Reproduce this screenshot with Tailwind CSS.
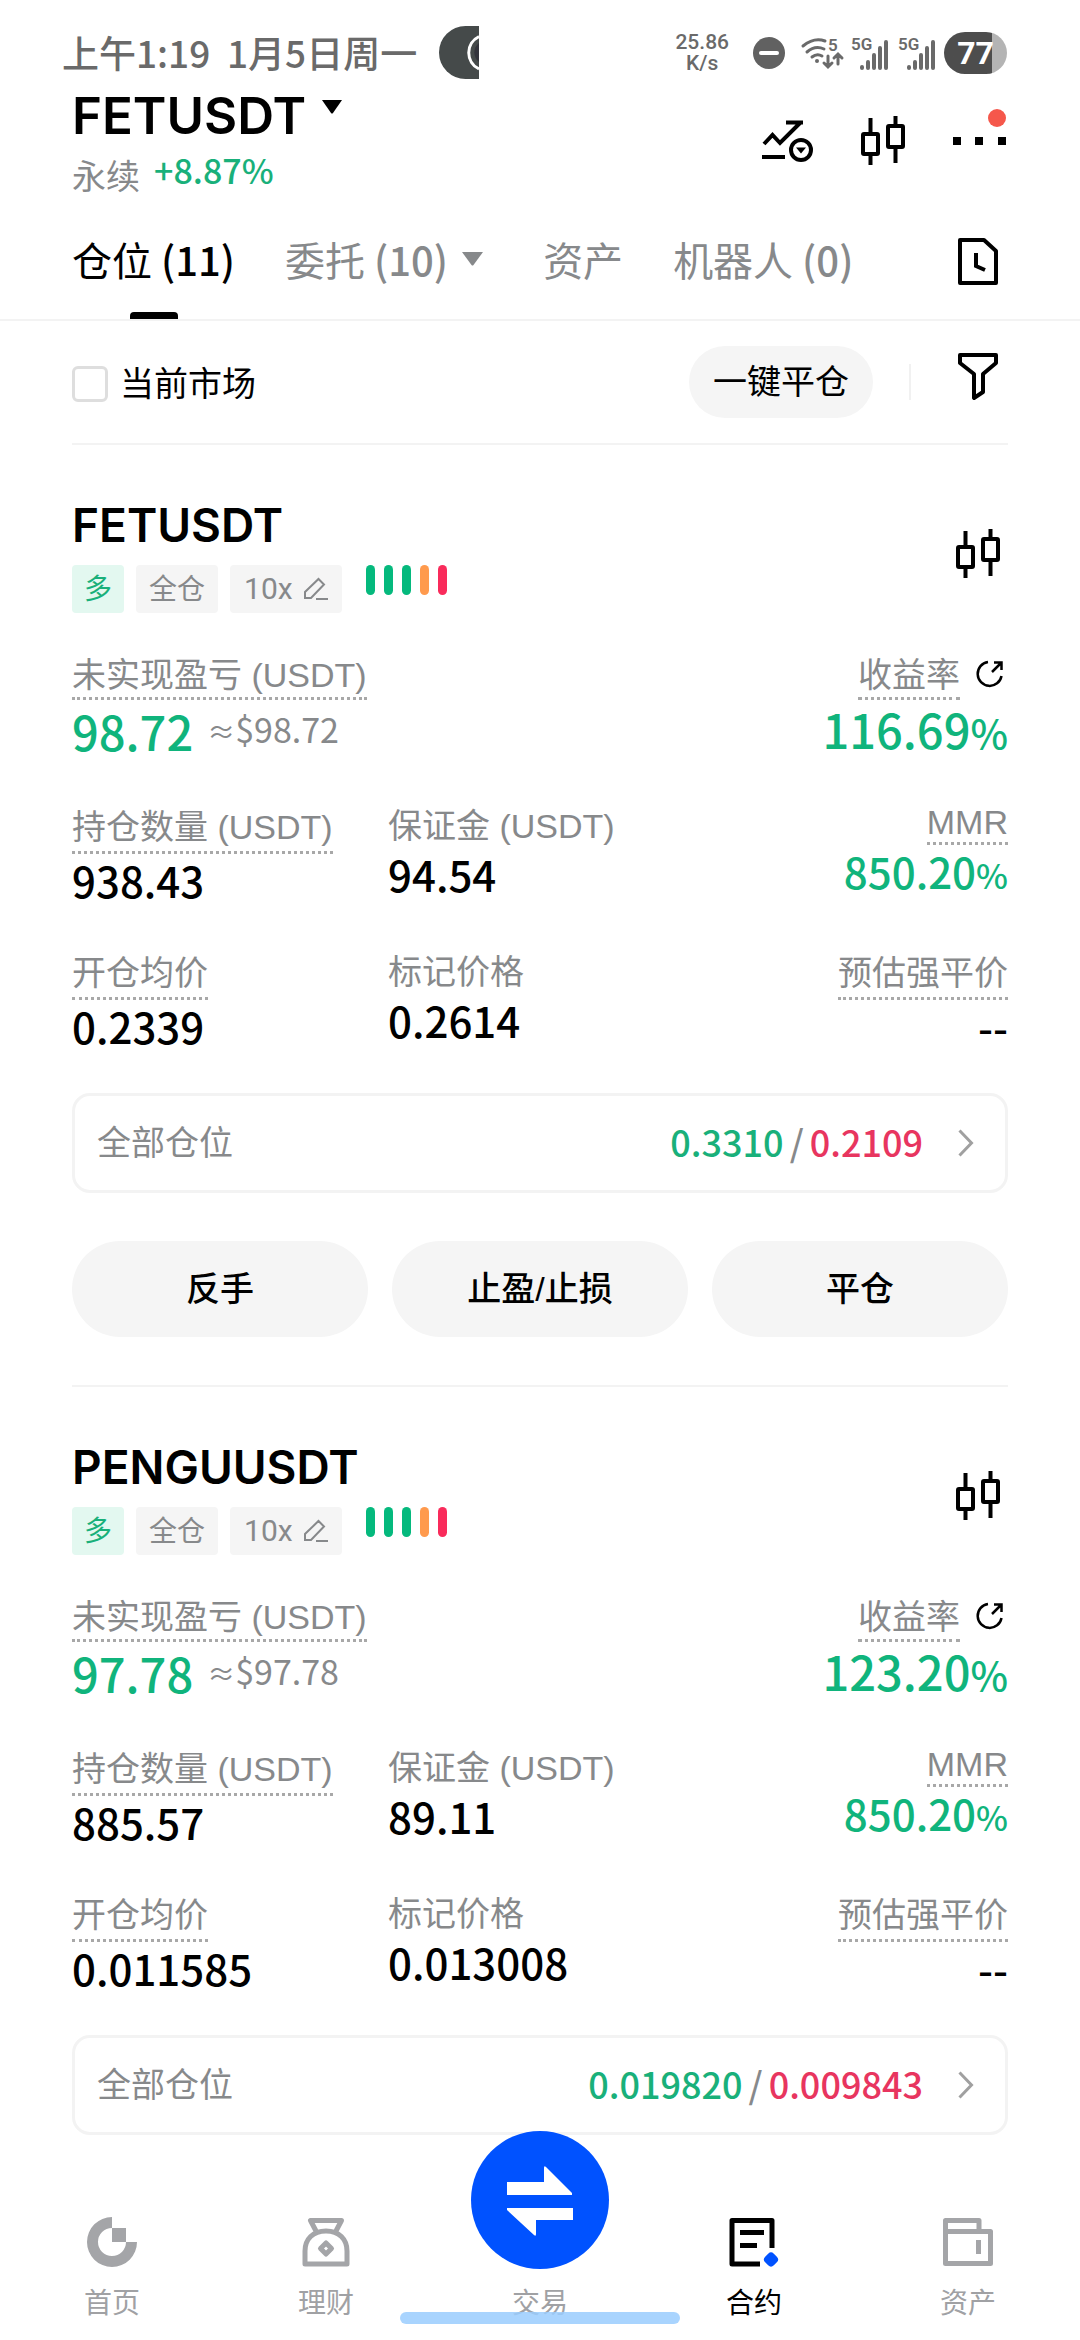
<!DOCTYPE html>
<html lang="zh-CN">
<head>
<meta charset="utf-8">
<meta name="viewport" content="width=device-width, initial-scale=1">
<title>FETUSDT 永续</title>
<script src="https://cdn.jsdelivr.net/npm/@tailwindcss/browser@4"></script>
</head>
<body class="bg-white text-black font-['Liberation_Sans','Noto_Sans_CJK_SC',sans-serif]">
<!-- shared icons -->
<svg class="hidden" aria-hidden="true">
  <symbol id="candles" viewBox="0 0 44 49"><g fill="none" stroke="currentColor" stroke-width="4"><rect x="2" y="18" width="15" height="20" rx="1"/><rect x="27" y="10" width="15" height="21" rx="1"/><path d="M9.500 2V18M9.500 38V49M34.500 0V10M34.500 31V47"/></g></symbol>
  <symbol id="pencil" viewBox="0 0 25 24"><g fill="none" stroke="currentColor" stroke-width="2"><path d="M2 21V15L15.500 2L21 7.500L8 21Z"/><path d="M13 22H25"/></g></symbol>
  <symbol id="share" viewBox="0 0 28 28"><g fill="none" stroke="currentColor" stroke-width="2.500"><path d="M12 2A12 12 0 1 0 25.500 16"/><path d="M16 12L25 3M18 2.500H25.500V10"/></g></symbol>
  <symbol id="chevron" viewBox="0 0 16 28"><path d="M1.500 1.500L13.500 14L1.500 26.500" fill="none" stroke="currentColor" stroke-width="3"/></symbol>
</svg>

<div class="flex min-h-screen flex-col">
  <!-- status bar -->
  <div class="flex items-center justify-between pt-[26px] pl-[62px] pr-[73px] text-[#6a6a6a]">
    <div class="flex items-center">
      <span class="whitespace-pre font-['Noto_Sans_CJK_SC',sans-serif] text-[37px] font-medium leading-[53px]">上午1:19  1月5日周一</span>
      <svg class="ml-[22px] h-[53px] w-10" viewBox="0 0 40 53"><path d="M40 0H26.500A26.500 26.500 0 0 0 26.500 53H40Z" fill="#454a4a"/><path d="M40 10.500A18 18 0 0 0 40 43" fill="none" stroke="#fff" stroke-width="3"/><path d="M40 17A12 12 0 0 0 40 36Z" fill="#33343c"/></svg>
    </div>
    <div class="flex items-center font-[Roboto,sans-serif]">
      <div class="text-center text-[21px] font-medium leading-[21px]">25.86<br>K/s</div>
      <svg class="ml-6 size-8" viewBox="0 0 32 32"><circle cx="16" cy="16" r="16" fill="#616161"/><path d="M8 16H24" stroke="#fff" stroke-width="4" stroke-linecap="round"/></svg>
      <svg class="ml-4 h-8 w-[42px] overflow-visible" viewBox="0 0 42 32"><g fill="none" stroke="#6a6a6a" stroke-width="3" stroke-linecap="round"><path d="M2 9Q13 0 24 4"/><path d="M6 15Q14 8 23 12"/><path d="M11 20Q16 16 21 19"/><path d="M27 19V29M23 26L27 30L31 26M37 27V18M33 21L37 17L41 21"/></g><circle cx="16" cy="24" r="2" fill="#6a6a6a"/><text x="27" y="14" font-size="17" font-weight="600" fill="#6a6a6a">5</text></svg>
      <svg class="ml-2 h-9 w-[38px]" viewBox="0 0 38 36"><g stroke="#6a6a6a" stroke-width="4" stroke-linecap="round"><path d="M11 32V33M17 27V33M23 20V33M29 13V33M35 7V33"/></g><text x="0" y="15" font-size="17" font-weight="600" fill="#6a6a6a">5G</text></svg>
      <svg class="ml-[9px] h-9 w-[38px]" viewBox="0 0 38 36"><g stroke="#6a6a6a" stroke-width="4" stroke-linecap="round"><path d="M11 32V33M17 27V33M23 20V33M29 13V33M35 7V33"/></g><text x="0" y="15" font-size="17" font-weight="600" fill="#6a6a6a">5G</text></svg>
      <div class="ml-2 flex h-[42px] w-[63px] items-center justify-center rounded-full bg-linear-to-r from-[#4d4d4d] from-76% to-[#b4b4b4] to-76% text-[32px] font-bold text-white">77</div>
    </div>
  </div>

  <!-- pair header -->
  <header class="flex items-center justify-between pt-[9px] pl-[72px] pr-[74px]">
    <div>
      <button class="flex items-start font-[Inter,sans-serif] text-[51px] font-semibold leading-[56px]">FETUSDT
        <svg class="ml-4 mt-3 h-[14px] w-5" viewBox="0 0 20 14"><path d="M0 0H20L11 13Q10 14 9 13Z"/></svg>
      </button>
      <div class="mt-[11px] flex items-start gap-[14px] text-[34px]">
        <span class="leading-[44px] text-[#87898b]">永续</span>
        <span class="font-['Noto_Sans_CJK_SC',sans-serif] font-medium leading-[30px] text-[#19b07a]">+8.87%</span>
      </div>
    </div>
    <div class="flex items-center gap-12 pb-[6px]">
      <button aria-label="行情"><svg class="h-[42px] w-[51px]" viewBox="0 0 51 42"><g fill="none" stroke="#000" stroke-width="4"><path d="M2 24L10.500 15L18 23L38 3M24 2.500H41M0 37H23"/><circle cx="39" cy="30" r="10"/></g><path d="M34 27.500H44L39 33.500Z"/></svg></button>
      <button aria-label="K线"><svg class="h-[49px] w-11"><use href="#candles"/></svg></button>
      <button class="relative" aria-label="更多"><svg class="h-2 w-[53px]" viewBox="0 0 53 8"><path d="M0 0H8V8H0ZM22 0H30V8H22ZM45 0H53V8H45Z"/></svg><span class="absolute -top-7 right-0 size-[18px] rounded-full bg-[#f5574b]"></span></button>
    </div>
  </header>

  <!-- tabs -->
  <nav class="mt-1 flex h-[118px] items-stretch border-b-2 border-[#f3f3f3] pl-[72px] pr-[82px] font-['Noto_Sans_CJK_SC',sans-serif] text-[40px] text-[#87898b]">
    <a href="#" class="relative flex items-center pb-1 text-black"><span>仓位 <span class="font-medium">(11)</span></span><span class="absolute bottom-0 left-1/2 h-[7px] w-12 -translate-x-1/2 rounded-t bg-black"></span></a>
    <a href="#" class="ml-[50px] flex items-center pb-1"><span>委托 <span class="font-medium">(10)</span></span><svg class="ml-[14px] h-[14px] w-[21px]" viewBox="0 0 21 14"><path d="M0 0H21L11.500 13Q10.500 14 9.500 13Z" fill="#87898b"/></svg></a>
    <a href="#" class="ml-[60px] flex items-center pb-1">资产</a>
    <a href="#" class="ml-[50px] flex items-center pb-1"><span>机器人 <span class="font-medium">(0)</span></span></a>
    <button class="ml-auto" aria-label="历史"><svg class="h-[47px] w-10" viewBox="0 0 40 47"><g fill="none" stroke="#000" stroke-width="4"><path d="M2 2H26L38 13V45H2Z" stroke-linejoin="round"/><path d="M18 15V28L27 32"/></g></svg></button>
  </nav>

  <main class="px-[72px]">
    <!-- filter row -->
    <div class="flex h-[124px] items-center border-b-2 border-[#f3f3f3] text-[34px]">
      <div class="flex items-center pt-1">
        <input id="cur" type="checkbox" class="size-9 appearance-none rounded-md border-3 border-[#dedede]">
        <label for="cur" class="pl-3">当前市场</label>
      </div>
      <button class="ml-auto h-[72px] rounded-full bg-[#f5f5f5] px-6">一键平仓</button>
      <span class="ml-9 h-9 w-[2px] bg-[#f1f1f1]"></span>
      <button class="ml-[47px] mr-[10px] -mt-3" aria-label="筛选"><svg class="h-[47px] w-10" viewBox="0 0 40 47"><path d="M2 2H38V10L25 21V39L16 45V21L2 10Z" fill="none" stroke="#000" stroke-width="4" stroke-linejoin="round"/></svg></button>
    </div>

    <!-- position: FET -->
    <section class="border-b-2 border-[#f3f3f3] pt-[52px] pb-12">
      <div class="flex items-center justify-between pr-2">
        <div>
          <h2 class="font-[Inter,sans-serif] text-[46px] font-semibold leading-[56px]">FETUSDT</h2>
          <div class="mt-3 flex items-start text-[28px] leading-[48px] text-[#87898b]">
            <span class="rounded bg-[#e3f8f0] px-3 pt-[2px] leading-[46px] text-[#19b07a]">多</span>
            <span class="ml-3 rounded bg-[#f5f5f5] px-[13px] pt-[2px] leading-[46px]">全仓</span>
            <button class="ml-3 flex items-center rounded bg-[#f5f5f5] px-[14px] font-[Roboto,sans-serif] text-[30px]">10x<svg class="ml-[10px] h-6 w-[25px]"><use href="#pencil"/></svg></button>
            <span class="ml-6 flex gap-[9px]"><i class="h-[30px] w-[9px] rounded-full bg-[#05b97d]"></i><i class="h-[30px] w-[9px] rounded-full bg-[#05b97d]"></i><i class="h-[30px] w-[9px] rounded-full bg-[#05b97d]"></i><i class="h-[30px] w-[9px] rounded-full bg-[#ff9a4d]"></i><i class="h-[30px] w-[9px] rounded-full bg-[#f92b5b]"></i></span>
          </div>
        </div>
        <button class="pb-1" aria-label="K线"><svg class="h-[49px] w-11"><use href="#candles"/></svg></button>
      </div>
      <div class="mt-10 flex justify-between text-[34px] leading-[44px] text-[#87898b]">
        <div>
          <span class="block w-fit border-b-3 border-dotted border-[#a8a8a8]">未实现盈亏 (USDT)</span>
          <div class="flex items-center gap-[14px] font-['Noto_Sans_CJK_SC',sans-serif] text-[34px] leading-[57px]"><span class="text-[47px] font-medium text-[#10b47c]">98.72</span><span><span class="text-[28px]">≈</span>$98.72</span></div>
        </div>
        <div class="flex flex-col items-end">
          <div class="flex items-start gap-4 pr-1"><span class="border-b-3 border-dotted border-[#a8a8a8]">收益率</span><button class="pt-[7px] text-black" aria-label="分享"><svg class="size-7"><use href="#share"/></svg></button></div>
          <div class="font-['Noto_Sans_CJK_SC',sans-serif] text-[47px] font-medium leading-[57px] text-[#10b47c]">116.69<span class="text-[40px]">%</span></div>
        </div>
      </div>
      <dl class="mt-[44px] grid grid-cols-[316fr_320fr_300fr] gap-y-[45px] font-['Noto_Sans_CJK_SC',sans-serif] text-[42px] font-medium leading-[52px]">
        <div><dt class="w-fit border-b-3 border-dotted border-[#a8a8a8] pb-[1px] font-['Liberation_Sans','Noto_Sans_CJK_SC',sans-serif] text-[34px] font-normal leading-[45px] text-[#87898b]">持仓数量 (USDT)</dt><dd>938.43</dd></div>
        <div><dt class="font-['Liberation_Sans','Noto_Sans_CJK_SC',sans-serif] text-[34px] font-normal leading-[43px] text-[#87898b]">保证金 (USDT)</dt><dd>94.54</dd></div>
        <div class="flex flex-col items-end"><dt class="border-b-3 border-dotted border-[#a8a8a8] pb-[2px] font-['Liberation_Sans','Noto_Sans_CJK_SC',sans-serif] text-[34px] font-normal leading-[35px] text-[#87898b]">MMR</dt><dd class="text-[#10b47c]">850.20<span class="text-[34px]">%</span></dd></div>
        <div><dt class="w-fit border-b-3 border-dotted border-[#a8a8a8] pb-[1px] font-['Liberation_Sans','Noto_Sans_CJK_SC',sans-serif] text-[34px] font-normal leading-[45px] text-[#87898b]">开仓均价</dt><dd>0.2339</dd></div>
        <div><dt class="font-['Liberation_Sans','Noto_Sans_CJK_SC',sans-serif] text-[34px] font-normal leading-[43px] text-[#87898b]">标记价格</dt><dd>0.2614</dd></div>
        <div class="flex flex-col items-end"><dt class="border-b-3 border-dotted border-[#a8a8a8] pb-[1px] font-['Liberation_Sans','Noto_Sans_CJK_SC',sans-serif] text-[34px] font-normal leading-[45px] text-[#87898b]">预估强平价</dt><dd>--</dd></div>
      </dl>
      <a href="#" class="mt-[41px] flex h-[100px] items-center rounded-[18px] border-3 border-[#f3f3f3] pl-[22px] pr-[31px] text-[34px] text-[#87898b]">
        <span>全部仓位</span>
        <span class="ml-auto flex gap-[6px] pb-1 font-['Noto_Sans_CJK_SC',sans-serif] text-[36px] font-medium"><span class="text-[#19b07a]">0.3310</span>/<span class="text-[#e8355f]">0.2109</span></span>
        <svg class="ml-[35px] h-7 w-4 text-[#a0a0a0]"><use href="#chevron"/></svg>
      </a>
      <div class="mt-12 grid grid-cols-3 gap-6 text-[34px] font-medium">
        <button class="h-24 rounded-full bg-[#f5f5f5]">反手</button>
        <button class="h-24 rounded-full bg-[#f5f5f5]">止盈/止损</button>
        <button class="h-24 rounded-full bg-[#f5f5f5]">平仓</button>
      </div>
    </section>

    <!-- position: PENGU -->
    <section class="pt-[52px]">
      <div class="flex items-center justify-between pr-2">
        <div>
          <h2 class="font-[Inter,sans-serif] text-[46px] font-semibold leading-[56px]">PENGUUSDT</h2>
          <div class="mt-3 flex items-start text-[28px] leading-[48px] text-[#87898b]">
            <span class="rounded bg-[#e3f8f0] px-3 pt-[2px] leading-[46px] text-[#19b07a]">多</span>
            <span class="ml-3 rounded bg-[#f5f5f5] px-[13px] pt-[2px] leading-[46px]">全仓</span>
            <button class="ml-3 flex items-center rounded bg-[#f5f5f5] px-[14px] font-[Roboto,sans-serif] text-[30px]">10x<svg class="ml-[10px] h-6 w-[25px]"><use href="#pencil"/></svg></button>
            <span class="ml-6 flex gap-[9px]"><i class="h-[30px] w-[9px] rounded-full bg-[#05b97d]"></i><i class="h-[30px] w-[9px] rounded-full bg-[#05b97d]"></i><i class="h-[30px] w-[9px] rounded-full bg-[#05b97d]"></i><i class="h-[30px] w-[9px] rounded-full bg-[#ff9a4d]"></i><i class="h-[30px] w-[9px] rounded-full bg-[#f92b5b]"></i></span>
          </div>
        </div>
        <button class="pb-1" aria-label="K线"><svg class="h-[49px] w-11"><use href="#candles"/></svg></button>
      </div>
      <div class="mt-10 flex justify-between text-[34px] leading-[44px] text-[#87898b]">
        <div>
          <span class="block w-fit border-b-3 border-dotted border-[#a8a8a8]">未实现盈亏 (USDT)</span>
          <div class="flex items-center gap-[14px] font-['Noto_Sans_CJK_SC',sans-serif] text-[34px] leading-[57px]"><span class="text-[47px] font-medium text-[#10b47c]">97.78</span><span><span class="text-[28px]">≈</span>$97.78</span></div>
        </div>
        <div class="flex flex-col items-end">
          <div class="flex items-start gap-4 pr-1"><span class="border-b-3 border-dotted border-[#a8a8a8]">收益率</span><button class="pt-[7px] text-black" aria-label="分享"><svg class="size-7"><use href="#share"/></svg></button></div>
          <div class="font-['Noto_Sans_CJK_SC',sans-serif] text-[47px] font-medium leading-[57px] text-[#10b47c]">123.20<span class="text-[40px]">%</span></div>
        </div>
      </div>
      <dl class="mt-[44px] grid grid-cols-[316fr_320fr_300fr] gap-y-[45px] font-['Noto_Sans_CJK_SC',sans-serif] text-[42px] font-medium leading-[52px]">
        <div><dt class="w-fit border-b-3 border-dotted border-[#a8a8a8] pb-[1px] font-['Liberation_Sans','Noto_Sans_CJK_SC',sans-serif] text-[34px] font-normal leading-[45px] text-[#87898b]">持仓数量 (USDT)</dt><dd>885.57</dd></div>
        <div><dt class="font-['Liberation_Sans','Noto_Sans_CJK_SC',sans-serif] text-[34px] font-normal leading-[43px] text-[#87898b]">保证金 (USDT)</dt><dd>89.11</dd></div>
        <div class="flex flex-col items-end"><dt class="border-b-3 border-dotted border-[#a8a8a8] pb-[2px] font-['Liberation_Sans','Noto_Sans_CJK_SC',sans-serif] text-[34px] font-normal leading-[35px] text-[#87898b]">MMR</dt><dd class="text-[#10b47c]">850.20<span class="text-[34px]">%</span></dd></div>
        <div><dt class="w-fit border-b-3 border-dotted border-[#a8a8a8] pb-[1px] font-['Liberation_Sans','Noto_Sans_CJK_SC',sans-serif] text-[34px] font-normal leading-[45px] text-[#87898b]">开仓均价</dt><dd>0.011585</dd></div>
        <div><dt class="font-['Liberation_Sans','Noto_Sans_CJK_SC',sans-serif] text-[34px] font-normal leading-[43px] text-[#87898b]">标记价格</dt><dd>0.013008</dd></div>
        <div class="flex flex-col items-end"><dt class="border-b-3 border-dotted border-[#a8a8a8] pb-[1px] font-['Liberation_Sans','Noto_Sans_CJK_SC',sans-serif] text-[34px] font-normal leading-[45px] text-[#87898b]">预估强平价</dt><dd>--</dd></div>
      </dl>
      <a href="#" class="mt-[41px] flex h-[100px] items-center rounded-[18px] border-3 border-[#f3f3f3] pl-[22px] pr-[31px] text-[34px] text-[#87898b]">
        <span>全部仓位</span>
        <span class="ml-auto flex gap-[6px] pb-1 font-['Noto_Sans_CJK_SC',sans-serif] text-[36px] font-medium"><span class="text-[#19b07a]">0.019820</span>/<span class="text-[#e8355f]">0.009843</span></span>
        <svg class="ml-[35px] h-7 w-4 text-[#a0a0a0]"><use href="#chevron"/></svg>
      </a>
    </section>
  </main>

  <!-- bottom navigation -->
  <nav class="relative mt-auto grid grid-cols-5 bg-white px-[5px] pb-[15px] text-[28px] leading-[42px] text-[#a0a1a4]">
    <a href="#" class="flex flex-col items-center gap-4"><svg class="size-[50px]" viewBox="0 0 50 50"><path d="M25 0A25 25 0 1 0 50 25H39A14 14 0 1 1 25 11Z" fill="#a4a5a8"/><path d="M25 11H39V25H25Z" fill="#a4a5a8"/></svg>首页</a>
    <a href="#" class="flex flex-col items-center gap-4"><svg class="size-[50px]" viewBox="0 0 50 50"><g fill="none" stroke="#a4a5a8" stroke-width="5" stroke-linejoin="round"><path d="M4 47V34C4 22 12 14 25 14S46 22 46 34V47Z"/><path d="M15 14L9.500 3.500H40.500L35 14"/><path d="M25 26L30.500 31.500L25 37L19.500 31.500Z"/></g></svg>理财</a>
    <a href="#" class="flex flex-col items-center justify-end">交易<svg class="absolute bottom-[71px] size-[138px]" viewBox="0 0 138 138"><circle cx="69" cy="69" r="69" fill="#0052ff"/><path d="M36 51H73V37Q73 34 75 36L101 62V64H36ZM102 77V89H65V103Q65 106 63 104L36 79V77Z" fill="#fff"/></svg></a>
    <a href="#" class="flex flex-col items-center gap-4 text-black"><svg class="size-[50px]" viewBox="0 0 50 50"><g fill="none" stroke="#000" stroke-width="5" stroke-linejoin="round"><path d="M43 31V3.500H3V47H31M11 15.500H35M11 28.500H28"/></g><path d="M42 39.500L45 42.500L42 45.500L39 42.500Z" fill="#0052ff" stroke="#0052ff" stroke-width="8" stroke-linejoin="round"/></svg>合约</a>
    <a href="#" class="flex flex-col items-center gap-4"><svg class="size-[50px]" viewBox="0 0 50 50"><g fill="none" stroke="#a4a5a8" stroke-width="5" stroke-linejoin="round"><path d="M2.500 14.500H47.500V46.500H2.500V3.500H36V14.500M35.500 23V37"/></g></svg>资产</a>
    <span class="absolute bottom-4 left-1/2 h-3 w-[280px] -translate-x-1/2 rounded-full bg-[#9accfe]/85"></span>
  </nav>
</div>
</body>
</html>
